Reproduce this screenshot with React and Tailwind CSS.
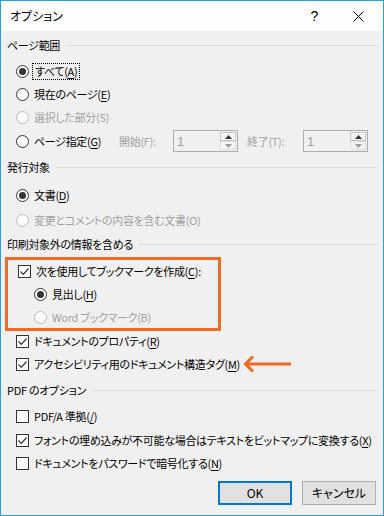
import React from "react";

const FONT = { fontFamily: '"Noto Sans CJK JP", "Noto Sans", sans-serif' };

function Radio({ checked, disabled }) {
  return (
    <span
      className={
        "relative inline-flex w-[13px] h-[13px] rounded-full border items-center justify-center shrink-0 " +
        (disabled ? "border-[#bcbcbc] bg-[#fcfcfc]" : "border-[#333333] bg-white")
      }
    >
      {checked && <span className="w-[7px] h-[7px] rounded-full bg-[#333333]" />}
    </span>
  );
}

function Check({ checked }) {
  return (
    <span className="inline-flex w-[13px] h-[13px] border border-[#333333] bg-white items-center justify-center shrink-0">
      {checked && (
        <svg width="11" height="11" viewBox="0 0 11 11">
          <path d="M1.5 5.5 L4.3 8.3 L9.5 2.5" fill="none" stroke="#333333" strokeWidth="1.2" />
        </svg>
      )}
    </span>
  );
}

function Heading({ children, h }) {
  return (
    <div className={"flex items-center pl-[6px] pr-[6px] " + h}>
      <span className="whitespace-nowrap">{children}</span>
      <span className="flex-1 h-px bg-[#dcdcdc] ml-[6px]" />
    </div>
  );
}

function U({ children }) {
  return <span className="underline underline-offset-2">{children}</span>;
}

function Spin() {
  return (
    <div className="flex w-[65px] h-[22px] border border-[#adadad] bg-[#f0f0f0] items-stretch shrink-0">
      <span className="flex-1 pl-[3px] pt-[2px] text-[#a0a0a0] text-[13px] leading-[18px]" style={{ fontFamily: '"Liberation Sans", sans-serif' }}>1</span>
      <div className="flex flex-col w-[16px] my-[1px] mr-[1px]">
        <div className="flex-1 flex items-center justify-center border border-[#c8c8c8] bg-[#f4f4f4]">
          <svg width="7" height="4" viewBox="0 0 7 4"><path d="M0 4 L3.5 0 L7 4Z" fill="#333" /></svg>
        </div>
        <div className="flex-1 flex items-center justify-center border border-[#dcdcdc] bg-[#f4f4f4]">
          <svg width="7" height="4" viewBox="0 0 7 4"><path d="M0 0 L3.5 4 L7 0Z" fill="#9a9a9a" /></svg>
        </div>
      </div>
    </div>
  );
}

export default function App() {
  return (
    <div
      style={FONT}
      className="w-[384px] h-[516px] border border-[#2b9de8] bg-[#f0f0f0] text-[11px] tracking-[-0.3px] text-black flex flex-col overflow-hidden whitespace-nowrap [font-feature-settings:'palt']"
    >
      {/* title bar */}
      <div className="h-[30px] bg-white flex items-center pl-[9px] shrink-0">
        <span className="text-[12px] tracking-normal">オプション</span>
        <span className="ml-auto mr-[35px] text-[14px]" style={{ fontFamily: '"Liberation Sans", sans-serif' }}>?</span>
        <svg width="11" height="11" viewBox="0 0 11 11" className="mr-[19px]">
          <path d="M0.5 0.5 L10.5 10.5 M10.5 0.5 L0.5 10.5" stroke="#000" strokeWidth="1" />
        </svg>
      </div>

      <div className="flex flex-col">
        <Heading h="h-[28px]">ページ範囲</Heading>
        <div className="h-[24px] flex items-center pl-[15px]">
          <Radio checked />
          <span className="ml-[3px] px-[2px] border border-dotted border-black leading-[15px]">
            すべて(<U>A</U>)
          </span>
        </div>
        <div className="h-[23px] flex items-center pl-[15px]">
          <Radio />
          <span className="ml-[5px]">現在のページ(<U>E</U>)</span>
        </div>
        <div className="h-[23px] flex items-center pl-[15px] text-[#a0a0a0]">
          <Radio disabled />
          <span className="ml-[5px]">選択した部分(S)</span>
        </div>
        <div className="h-[24px] flex items-center pl-[15px]">
          <Radio />
          <span className="ml-[5px] w-[85px] shrink-0">ページ指定(<U>G</U>)</span>
          <span className="text-[#a0a0a0] w-[54px] shrink-0">開始(F):</span>
          <Spin />
          <span className="text-[#a0a0a0] ml-[9px] w-[56px] shrink-0">終了(T):</span>
          <Spin />
        </div>

        <Heading h="h-[28px]">発行対象</Heading>
        <div className="h-[28px] flex items-center pl-[15px]">
          <Radio checked />
          <span className="ml-[5px]">文書(<U>D</U>)</span>
        </div>
        <div className="h-[22px] flex items-center pl-[15px] text-[#a0a0a0]">
          <Radio disabled />
          <span className="ml-[5px]">変更とコメントの内容を含む文書(O)</span>
        </div>

        <Heading h="h-[26px]">印刷対象外の情報を含める</Heading>
        <div className="ml-[4px] w-[216px] border-[3px] border-[#f26b24] pl-[10px] flex flex-col">
          <div className="h-[23px] flex items-center">
            <Check checked />
            <span className="ml-[5px]">次を使用してブックマークを作成(<U>C</U>):</span>
          </div>
          <div className="h-[23px] flex items-center pl-[16px]">
            <Radio checked />
            <span className="ml-[5px]">見出し(<U>H</U>)</span>
          </div>
          <div className="h-[22px] flex items-center pl-[16px] text-[#a0a0a0]">
            <Radio disabled />
            <span className="ml-[5px]">Word ブックマーク(B)</span>
          </div>
        </div>
        <div className="h-[21px] flex items-center pl-[15px]">
          <Check checked />
          <span className="ml-[5px]">ドキュメントのプロパティ(<U>R</U>)</span>
        </div>
        <div className="h-[24px] flex items-center pl-[15px] relative">
          <Check checked />
          <span className="ml-[5px]">アクセシビリティ用のドキュメント構造タグ(<U>M</U>)</span>
          <svg width="50" height="18" viewBox="0 0 50 18" className="absolute left-[242px] top-[3px]">
            <path d="M3 9 L48 9" stroke="#f26b24" strokeWidth="3" />
            <path d="M10 1.5 L2.5 9 L10 16.5" fill="none" stroke="#f26b24" strokeWidth="3" />
          </svg>
        </div>

        <Heading h="h-[28px]">PDF のオプション</Heading>
        <div className="h-[24px] flex items-center pl-[15px]">
          <Check />
          <span className="ml-[5px]">PDF/A 準拠(<U>/</U>)</span>
        </div>
        <div className="h-[24px] flex items-center pl-[15px]">
          <Check checked />
          <span className="ml-[5px]">フォントの埋め込みが不可能な場合はテキストをビットマップに変換する(<U>X</U>)</span>
        </div>
        <div className="h-[23px] flex items-center pl-[15px]">
          <Check />
          <span className="ml-[5px]">ドキュメントをパスワードで暗号化する(<U>N</U>)</span>
        </div>

        <div className="flex justify-end gap-[10px] pr-[7px] mt-[6px] tracking-normal">
          <button className="w-[74px] h-[24px] border-2 border-[#0078d7] bg-[#e1e1e1] text-[12px]">OK</button>
          <button className="w-[74px] h-[24px] border border-[#adadad] bg-[#e1e1e1] text-[12px]">キャンセル</button>
        </div>
      </div>
    </div>
  );
}
